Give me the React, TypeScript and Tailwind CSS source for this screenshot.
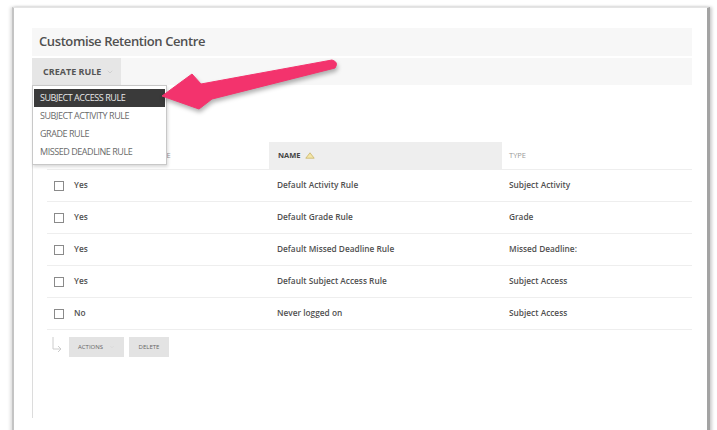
import { ChevronDown } from "lucide-react";

type Rule = { active: string; name: string; type: string };

const rules: Rule[] = [
  { active: "Yes", name: "Default Activity Rule", type: "Subject Activity" },
  { active: "Yes", name: "Default Grade Rule", type: "Grade" },
  { active: "Yes", name: "Default Missed Deadline Rule", type: "Missed Deadline:" },
  { active: "Yes", name: "Default Subject Access Rule", type: "Subject Access" },
  { active: "No", name: "Never logged on", type: "Subject Access" },
];

const menuItems = [
  "Subject Access Rule",
  "Subject Activity Rule",
  "Grade Rule",
  "Missed Deadline Rule",
];

const CreateRuleMenu = () => (
  <div className="absolute left-0 top-full z-10 w-[135px] border border-[#c8c8c8] bg-white py-[3px] shadow-[1px_2px_3px_rgba(0,0,0,0.15)]">
    {menuItems.map((item, i) => (
      <div
        key={item}
        className={
          i === 0
            ? "mx-px flex h-[18px] items-center bg-[#3a3a3a] px-[6px] text-[9px] uppercase tracking-[-0.45px] text-[#e8e8e8]"
            : "mx-px flex h-[18px] items-center px-[6px] text-[9px] uppercase tracking-[-0.45px] text-[#6a6a6a]"
        }
      >
        {item}
      </div>
    ))}
  </div>
);

const Pointer = () => (
  <svg
    className="pointer-events-none absolute left-0 top-0 z-20 drop-shadow-[1px_3px_2px_rgba(0,0,0,0.3)]"
    width="717"
    height="430"
    viewBox="0 0 717 430"
  >
    <path
      d="M162 96 L192 74 L201 84 L332 60 Q339 62 335 68 L212 99 L199 109 Z"
      fill="#f3336d"
      stroke="#f3336d"
      strokeWidth="1"
      strokeLinejoin="round"
    />
  </svg>
);

const SortIcon = () => (
  <svg width="10" height="7" viewBox="0 0 10 7" className="ml-[4px]">
    <path d="M5 0.8 L9.2 6.2 H0.8 Z" fill="#f4e6a8" stroke="#c9b56a" strokeWidth="0.8" />
  </svg>
);

export default function App() {
  return (
    <div className="relative h-[430px] w-[717px] overflow-hidden bg-white pl-[12px] pt-[7px] font-['Open_Sans',sans-serif]">
      <div className="h-[440px] w-[698px] border-l-[2px] border-r-[3px] border-t border-l-[#c4c4c4] border-r-[#a3a3a3] border-t-[#e4e4e4] pl-[18px] pr-[15px] pt-[20px] shadow-[-2px_0_3px_rgba(0,0,0,0.12),2px_0_3px_rgba(0,0,0,0.2)]">
        <div className="flex h-[28px] items-center bg-[#f7f7f7] px-[7px]">
          <h1 className="text-[13px] font-semibold tracking-[-0.4px] text-[#505050]">
            Customise Retention Centre
          </h1>
        </div>

        <div className="relative mt-[2px] flex h-[27px] bg-[#f7f7f7]">
          <button className="flex h-full w-[89px] items-center bg-[#e6e6e6] pl-[11px] text-[9px] font-bold uppercase text-[#555]">
            Create Rule
            <ChevronDown size={8} strokeWidth={1.5} className="ml-[5px] text-[#bbb]" />
          </button>
          <CreateRuleMenu />
        </div>

        <div className="h-[333px] border-l border-[#dcdcdc] pl-[14px] pt-[57px]">
          <div className="flex h-[28px] items-center border-b border-[#eee] text-[7.5px] uppercase">
            {/* first header label sits under the open menu */}
            <div className="w-[222px] pl-[76px] text-[#999]">Active State</div>
            <div className="flex h-full w-[233px] items-center bg-[#eeeeee] pl-[9px] font-bold text-[#444]">
              Name
              <SortIcon />
            </div>
            <div className="pl-[7px] text-[#999]">Type</div>
          </div>

          {rules.map((rule) => (
            <div
              key={rule.name}
              className="flex h-[32px] items-center border-b border-[#eee] text-[8.3px] font-semibold text-[#505050]"
            >
              <div className="flex w-[222px] items-center pl-[7px]">
                <span className="h-[10px] w-[10px] border border-[#8a8a8a] bg-white" />
                <span className="ml-[10px]">{rule.active}</span>
              </div>
              <div className="w-[233px] pl-[8px]">{rule.name}</div>
              <div className="pl-[7px]">{rule.type}</div>
            </div>
          ))}

          <div className="mt-[7px] flex items-start">
            <svg width="22" height="20" viewBox="0 0 22 20">
              <path d="M6 0 V12 H13" fill="none" stroke="#ccc" strokeWidth="1" />
              <path d="M11 9 L14 12 L11 15" fill="none" stroke="#ccc" strokeWidth="1" />
            </svg>
            <button className="flex h-[20px] w-[55px] items-center bg-[#e3e3e3] pl-[9px] text-[6px] uppercase text-[#666]">
              Actions
              <ChevronDown size={6} strokeWidth={1.5} className="ml-[6px] text-[#ccc]" />
            </button>
            <button className="ml-[5px] flex h-[20px] w-[40px] items-center justify-center bg-[#e3e3e3] text-[6px] uppercase text-[#666]">
              Delete
            </button>
          </div>
        </div>
      </div>
      <Pointer />
    </div>
  );
}
